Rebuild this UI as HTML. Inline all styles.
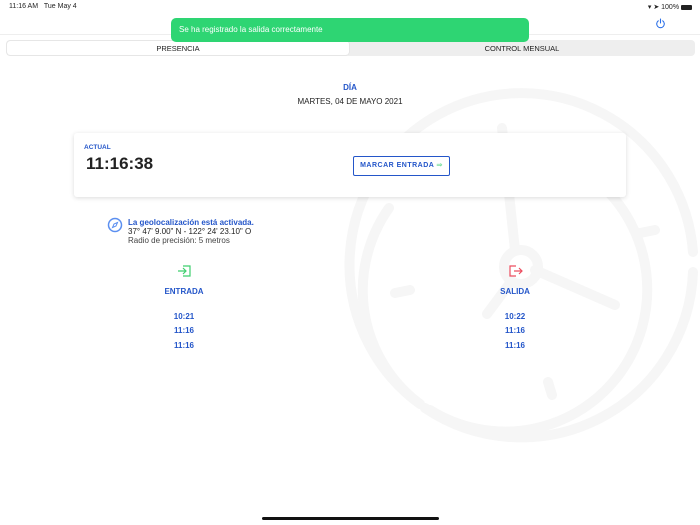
<!DOCTYPE html>
<html><head><meta charset="utf-8"><style>
*{margin:0;padding:0;box-sizing:border-box}
body{width:700px;height:525px;background:#fff;font-family:"Liberation Sans",sans-serif;position:relative;overflow:hidden;color:#222}
.abs{position:absolute}
.blue{color:#2456c9}
.t{position:absolute;width:100px;text-align:center;font-size:8px;font-weight:bold;color:#2456c9}
</style></head><body>
<svg class="abs" style="left:0;top:0" width="700" height="525">
 <g fill="none" stroke="#f6f6f6" stroke-width="10" stroke-linecap="round">
  <path d="M 420 404 A 172 172 0 1 1 693 252"/>
  <path d="M 693 272 A 172 172 0 0 1 425 408"/>
  <path d="M 389 208 A 142 142 0 0 0 410 396"/>
  <path d="M 430 410 A 142 142 0 1 0 404 190"/>
  <path d="M 502 128 L 515 250"/>
  <path d="M 535 270 L 615 305"/>
  <path d="M 510 283 L 487 314"/>
  <path d="M 395 293 L 410 290"/>
  <path d="M 640 233 L 655 230"/>
  <path d="M 548 382 L 552 395"/>
  <circle cx="521" cy="267" r="17"/>
 </g>
</svg>
<div class="abs" style="left:9px;top:3px;font-size:7px">11:16 AM&nbsp;&nbsp;&nbsp;Tue May 4</div>
<div class="abs" style="right:8px;top:3px;font-size:7px">&#9662; &#10148; 100% <span style="display:inline-block;width:11px;height:5px;background:#222;border-radius:1px;vertical-align:middle"></span></div>
<div class="abs" style="left:0;top:34px;width:700px;height:1px;background:#eee"></div>
<svg class="abs" style="left:655px;top:18px" width="11" height="11" viewBox="0 0 11 11"><path d="M3.3 2.8A3.8 3.8 0 1 0 7.7 2.8M5.5 1v4" fill="none" stroke="#2a6fe8" stroke-width="1.1" stroke-linecap="round"/></svg>
<div class="abs" style="left:6px;top:40px;width:689px;height:16px;background:#eeeeee;border-radius:4px"></div>
<div class="abs" style="left:7px;top:41px;width:342px;height:14px;background:#fff;border-radius:3px;box-shadow:0 0 1px #bbb;font-size:7.5px;text-align:center;line-height:15px">PRESENCIA</div>
<div class="abs" style="left:349px;top:41px;width:346px;font-size:7.5px;text-align:center;line-height:15px">CONTROL MENSUAL</div>
<div class="abs" style="left:171px;top:18px;width:358px;height:24px;background:#2ed573;border-radius:5px;color:#fff;font-size:8px;line-height:24px;padding-left:8px">Se ha registrado la salida correctamente</div>
<div class="abs blue" style="left:0;width:700px;top:83px;text-align:center;font-size:8px;font-weight:bold">DÍA</div>
<div class="abs" style="left:0;width:700px;top:97px;text-align:center;font-size:8px">MARTES, 04 DE MAYO 2021</div>
<div class="abs" style="left:74px;top:133px;width:552px;height:64px;background:#fff;border-radius:3px;box-shadow:0 1px 5px rgba(0,0,0,.15)"></div>
<div class="abs blue" style="left:84px;top:144px;font-size:6.5px;font-weight:bold">ACTUAL</div>
<div class="abs" style="left:86px;top:154px;font-size:17px;font-weight:bold;color:#222">11:16:38</div>
<div class="abs blue" style="left:353px;top:156px;width:97px;height:20px;border:1.5px solid #2456c9;border-radius:2px;font-size:7px;font-weight:bold;text-align:center;line-height:17px;letter-spacing:.5px">MARCAR ENTRADA <span style="color:#7de0a0">&#8658;</span></div>
<svg class="abs" style="left:107px;top:217px" width="16" height="16" viewBox="0 0 16 16"><circle cx="8" cy="8" r="6.5" fill="none" stroke="#5b8ff0" stroke-width="1.5"/><path d="M10.5 5.5L9 9 5.5 10.5 7 7z" fill="none" stroke="#5b8ff0" stroke-width="1"/></svg>
<div class="abs blue" style="left:128px;top:218px;font-size:8px;font-weight:bold">La geolocalización está activada.</div>
<div class="abs" style="left:128px;top:227px;font-size:8px">37° 47' 9.00" N - 122° 24' 23.10" O</div>
<div class="abs" style="left:128px;top:236px;font-size:8px;color:#444">Radio de precisión: 5 metros</div>
<svg class="abs" style="left:177px;top:265px" width="15" height="12" viewBox="0 0 15 12"><path d="M1 6h8M6 3l3 3-3 3M6 1h7v10H6" fill="none" stroke="#3ecf6e" stroke-width="1.2"/></svg>
<svg class="abs" style="left:508px;top:265px" width="15" height="12" viewBox="0 0 15 12"><path d="M8 1H2v10h6M6 6h8M11 3l3 3-3 3" fill="none" stroke="#ec4d5f" stroke-width="1.2"/></svg>
<div class="t" style="left:134px;top:287px">ENTRADA</div>
<div class="t" style="left:134px;top:312px">10:21</div>
<div class="t" style="left:134px;top:326px">11:16</div>
<div class="t" style="left:134px;top:341px">11:16</div>
<div class="t" style="left:465px;top:287px">SALIDA</div>
<div class="t" style="left:465px;top:312px">10:22</div>
<div class="t" style="left:465px;top:326px">11:16</div>
<div class="t" style="left:465px;top:341px">11:16</div>
<div class="abs" style="left:262px;top:517px;width:177px;height:3px;background:#111;border-radius:2px"></div>
</body></html>
